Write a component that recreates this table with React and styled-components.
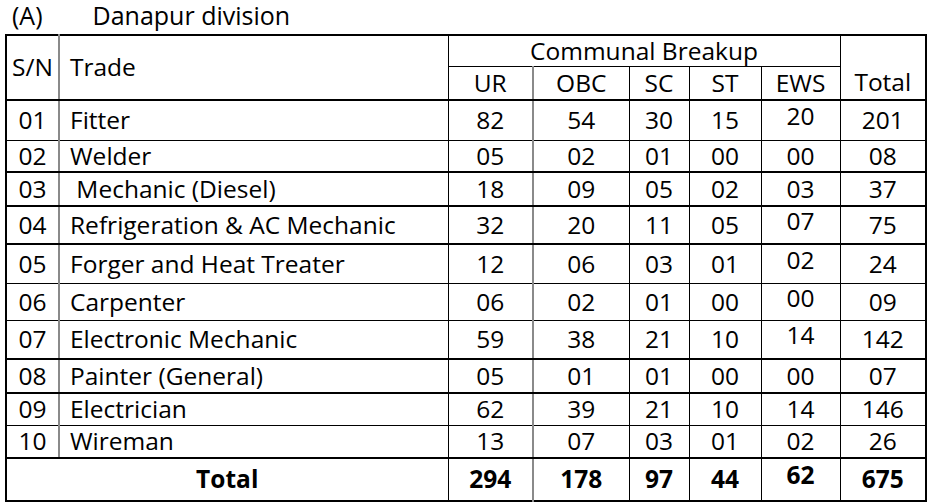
import styled, { createGlobalStyle } from "styled-components";

const GlobalStyle = createGlobalStyle`
  body {
    margin: 0;
    background: #fff;
    font-family: "Open Sans", "Noto Sans", sans-serif;
    color: #000;
  }
`;

const rows = [
  { sn: "01", trade: "Fitter", nums: ["82", "54", "30", "15", "20", "201"], h: 40, thick: false, lift: true },
  { sn: "02", trade: "Welder", nums: ["05", "02", "01", "00", "00", "08"], h: 32, thick: true },
  { sn: "03", trade: " Mechanic (Diesel)", nums: ["18", "09", "05", "02", "03", "37"], h: 33, thick: true },
  { sn: "04", trade: "Refrigeration & AC Mechanic", nums: ["32", "20", "11", "05", "07", "75"], h: 38, thick: true, lift: true },
  { sn: "05", trade: "Forger and Heat Treater", nums: ["12", "06", "03", "01", "02", "24"], h: 39, thick: false, lift: true },
  { sn: "06", trade: "Carpenter", nums: ["06", "02", "01", "00", "00", "09"], h: 38, thick: false, lift: true },
  { sn: "07", trade: "Electronic Mechanic", nums: ["59", "38", "21", "10", "14", "142"], h: 38, thick: true, lift: true },
  { sn: "08", trade: "Painter (General)", nums: ["05", "01", "01", "00", "00", "07"], h: 34, thick: true },
  { sn: "09", trade: "Electrician", nums: ["62", "39", "21", "10", "14", "146"], h: 32, thick: false },
  { sn: "10", trade: "Wireman", nums: ["13", "07", "03", "01", "02", "26"], h: 33, thick: true },
];

const totals = ["294", "178", "97", "44", "62", "675"];
const widths = [53, 389, 85, 96, 60, 72, 79, 86];

const Page = styled.div`
  padding: 0 0 0 5px;
`;

const Title = styled.div`
  display: flex;
  align-items: center;
  height: 32px;
  padding-left: 7px;
  padding-bottom: 2px;
  font-size: 25px;
  font-weight: 500;
  line-height: 1.1;
  gap: 50px;
`;

const Table = styled.table`
  border-collapse: collapse;
  table-layout: fixed;
  width: 920px;
  border: 2px solid #000;
  font-size: 24.5px;
  font-weight: 500;
`;

const Cell = styled.td`
  height: ${({ h }) => h - 1.5}px;
  padding: 0;
  border: 1px solid #000;
  border-bottom: ${({ thick }) => (thick ? "2px solid #000" : "1px solid #000")};
  border-left: ${({ gray }) => (gray ? "2px solid #8a8a8a" : "1px solid #000")};
  text-align: ${({ left }) => (left ? "left" : "center")};
  vertical-align: ${({ bottom }) => (bottom ? "bottom" : "middle")};
  padding-left: ${({ left }) => (left ? "10px" : "0")};
  font-weight: ${({ bold }) => (bold ? 700 : 500)};
  line-height: 1;
  white-space: pre;
`;

const HeadCell = styled(Cell).attrs({ as: "th" })`
  font-weight: 500;
  padding-bottom: ${({ bottom }) => (bottom ? "5px" : "0")};
`;

const Num = styled.span`
  position: relative;
  top: ${({ lift }) => (lift ? "-4px" : "0")};
`;

export default function App() {
  return (
    <>
      <GlobalStyle />
      <Page>
        <Title>
          <span>(A)</span>
          <span>Danapur division</span>
        </Title>
        <Table>
          <colgroup>
            {widths.map((w, i) => (
              <col key={i} style={{ width: w }} />
            ))}
          </colgroup>
          <thead>
            <tr>
              <HeadCell rowSpan={2} h={31} thick>S/N</HeadCell>
              <HeadCell rowSpan={2} h={31} thick gray left>Trade</HeadCell>
              <HeadCell colSpan={5} h={31}>Communal Breakup</HeadCell>
              <HeadCell rowSpan={2} h={31} thick bottom>Total</HeadCell>
            </tr>
            <tr>
              <HeadCell h={34} thick>UR</HeadCell>
              <HeadCell h={34} thick gray>OBC</HeadCell>
              <HeadCell h={34} thick>SC</HeadCell>
              <HeadCell h={34} thick>ST</HeadCell>
              <HeadCell h={34} thick>EWS</HeadCell>
            </tr>
          </thead>
          <tbody>
            {rows.map((r) => (
              <tr key={r.sn}>
                <Cell h={r.h} thick={r.thick}>{r.sn}</Cell>
                <Cell h={r.h} thick={r.thick} gray left>{r.trade}</Cell>
                {r.nums.map((n, i) => (
                  <Cell key={i} h={r.h} thick={r.thick} gray={i === 1}>
                    <Num lift={i === 4 && r.lift}>{n}</Num>
                  </Cell>
                ))}
              </tr>
            ))}
            <tr>
              <Cell colSpan={2} h={42} bold>Total</Cell>
              {totals.map((n, i) => (
                <Cell key={i} h={42} bold gray={i === 1}>
                  <Num lift={i === 4}>{n}</Num>
                </Cell>
              ))}
            </tr>
          </tbody>
        </Table>
      </Page>
    </>
  );
}
